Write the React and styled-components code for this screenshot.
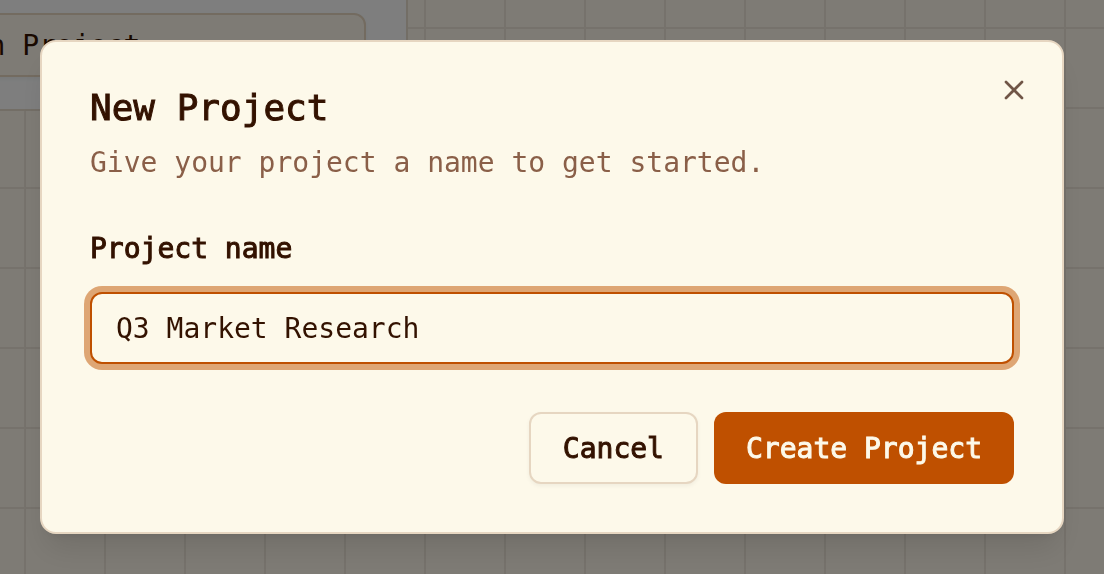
import React, { useState } from 'react';
import styled, { createGlobalStyle } from 'styled-components';
import { X } from 'lucide-react';

const GlobalStyle = createGlobalStyle`
  * {
    box-sizing: border-box;
  }
  body {
    margin: 0;
  }
  body, button, input {
    font-family: 'DejaVu Sans Mono', 'Liberation Mono', monospace;
    font-size: 28px;
    color: #331200;
  }
`;

const Canvas = styled.div`
  display: flex;
  align-items: flex-start;
  min-height: 100vh;
  overflow: hidden;
  background-color: #fdf7ea;
  background-image:
    linear-gradient(to right, #ece5d8 2px, transparent 2px),
    linear-gradient(to bottom, #ece5d8 2px, transparent 2px);
  background-size: 80px 80px;
  background-position: 24px 27px;
`;

const Toolbar = styled.div`
  display: flex;
  justify-content: flex-end;
  width: 408px;
  padding: 13px 40px 32px 0;
  overflow: hidden;
  background: #fcfdfd;
  border: solid #e6dccd;
  border-width: 0 2px 2px 0;
`;

const Button = styled.button`
  flex: none;
  height: 72px;
  padding: 2px 32px 0;
  line-height: 40px;
  color: ${({ primary }) => (primary ? '#fdf9ea' : '#331200')};
  background: ${({ primary }) => (primary ? '#bf5000' : '#fdf9ea')};
  border: ${({ primary }) => (primary ? '0' : '2px solid #e6d6c1')};
  border-radius: 12px;
  box-shadow: ${({ primary }) => (primary ? 'none' : '0 2px 4px rgba(0, 0, 0, 0.05)')};
  -webkit-text-stroke: 1px currentColor;
  cursor: pointer;
`;

const MenuButton = styled(Button)`
  width: 480px;
  height: 64px;
  padding: 2px 50px 0;
  text-align: left;
  background: #fdf7ea;
  -webkit-text-stroke: 0;
`;

const Overlay = styled.div`
  position: fixed;
  inset: 0;
  display: flex;
  align-items: center;
  justify-content: center;
  padding: 40px;
  background: rgba(0, 0, 0, 0.5);
`;

const Dialog = styled.form`
  width: 100%;
  max-width: 1024px;
  padding: 48px;
  background: #fdf9ea;
  border: 2px solid #e6d6c1;
  border-radius: 16px;
  box-shadow:
    0 20px 30px -6px rgba(0, 0, 0, 0.1),
    0 8px 12px -8px rgba(0, 0, 0, 0.1);
`;

const Header = styled.div`
  display: flex;
  align-items: flex-start;
  justify-content: space-between;
`;

const Title = styled.h2`
  margin: 0;
  font-size: 36px;
  line-height: 36px;
  font-weight: normal;
  -webkit-text-stroke: 1px currentColor;
`;

const CloseButton = styled.button`
  display: flex;
  margin: -16px -16px 0 0;
  padding: 0;
  color: #705647;
  background: none;
  border: 0;
  cursor: pointer;
`;

const Description = styled.p`
  margin: 17px 0 48px;
  line-height: 40px;
  color: #8a5f48;
`;

const Label = styled.label`
  display: block;
  margin-bottom: 25px;
  line-height: 36px;
  -webkit-text-stroke: 1px currentColor;
`;

const Input = styled.input`
  display: block;
  width: 100%;
  height: 72px;
  padding: 0 24px;
  background: #fdf9ea;
  border: 2px solid #bf5000;
  border-radius: 12px;
  outline: none;
  box-shadow: 0 0 0 6px #dea674;
`;

const Footer = styled.div`
  display: flex;
  justify-content: flex-end;
  gap: 16px;
  margin-top: 48px;
`;

export default () => {
  const [name, setName] = useState('Q3 Market Research');

  return (
    <>
      <GlobalStyle />
      <Canvas>
        <Toolbar>
          <MenuButton type="button">Open Project</MenuButton>
        </Toolbar>
      </Canvas>
      <Overlay>
        <Dialog
          role="dialog"
          aria-labelledby="dialog-title"
          onSubmit={(e) => e.preventDefault()}
        >
          <Header>
            <Title id="dialog-title">New Project</Title>
            <CloseButton type="button" aria-label="Close">
              <X size={32} />
            </CloseButton>
          </Header>
          <Description>Give your project a name to get started.</Description>
          <Label htmlFor="project-name">Project name</Label>
          <Input
            id="project-name"
            value={name}
            onChange={(e) => setName(e.target.value)}
          />
          <Footer>
            <Button type="button">Cancel</Button>
            <Button type="submit" primary>Create Project</Button>
          </Footer>
        </Dialog>
      </Overlay>
    </>
  );
}
